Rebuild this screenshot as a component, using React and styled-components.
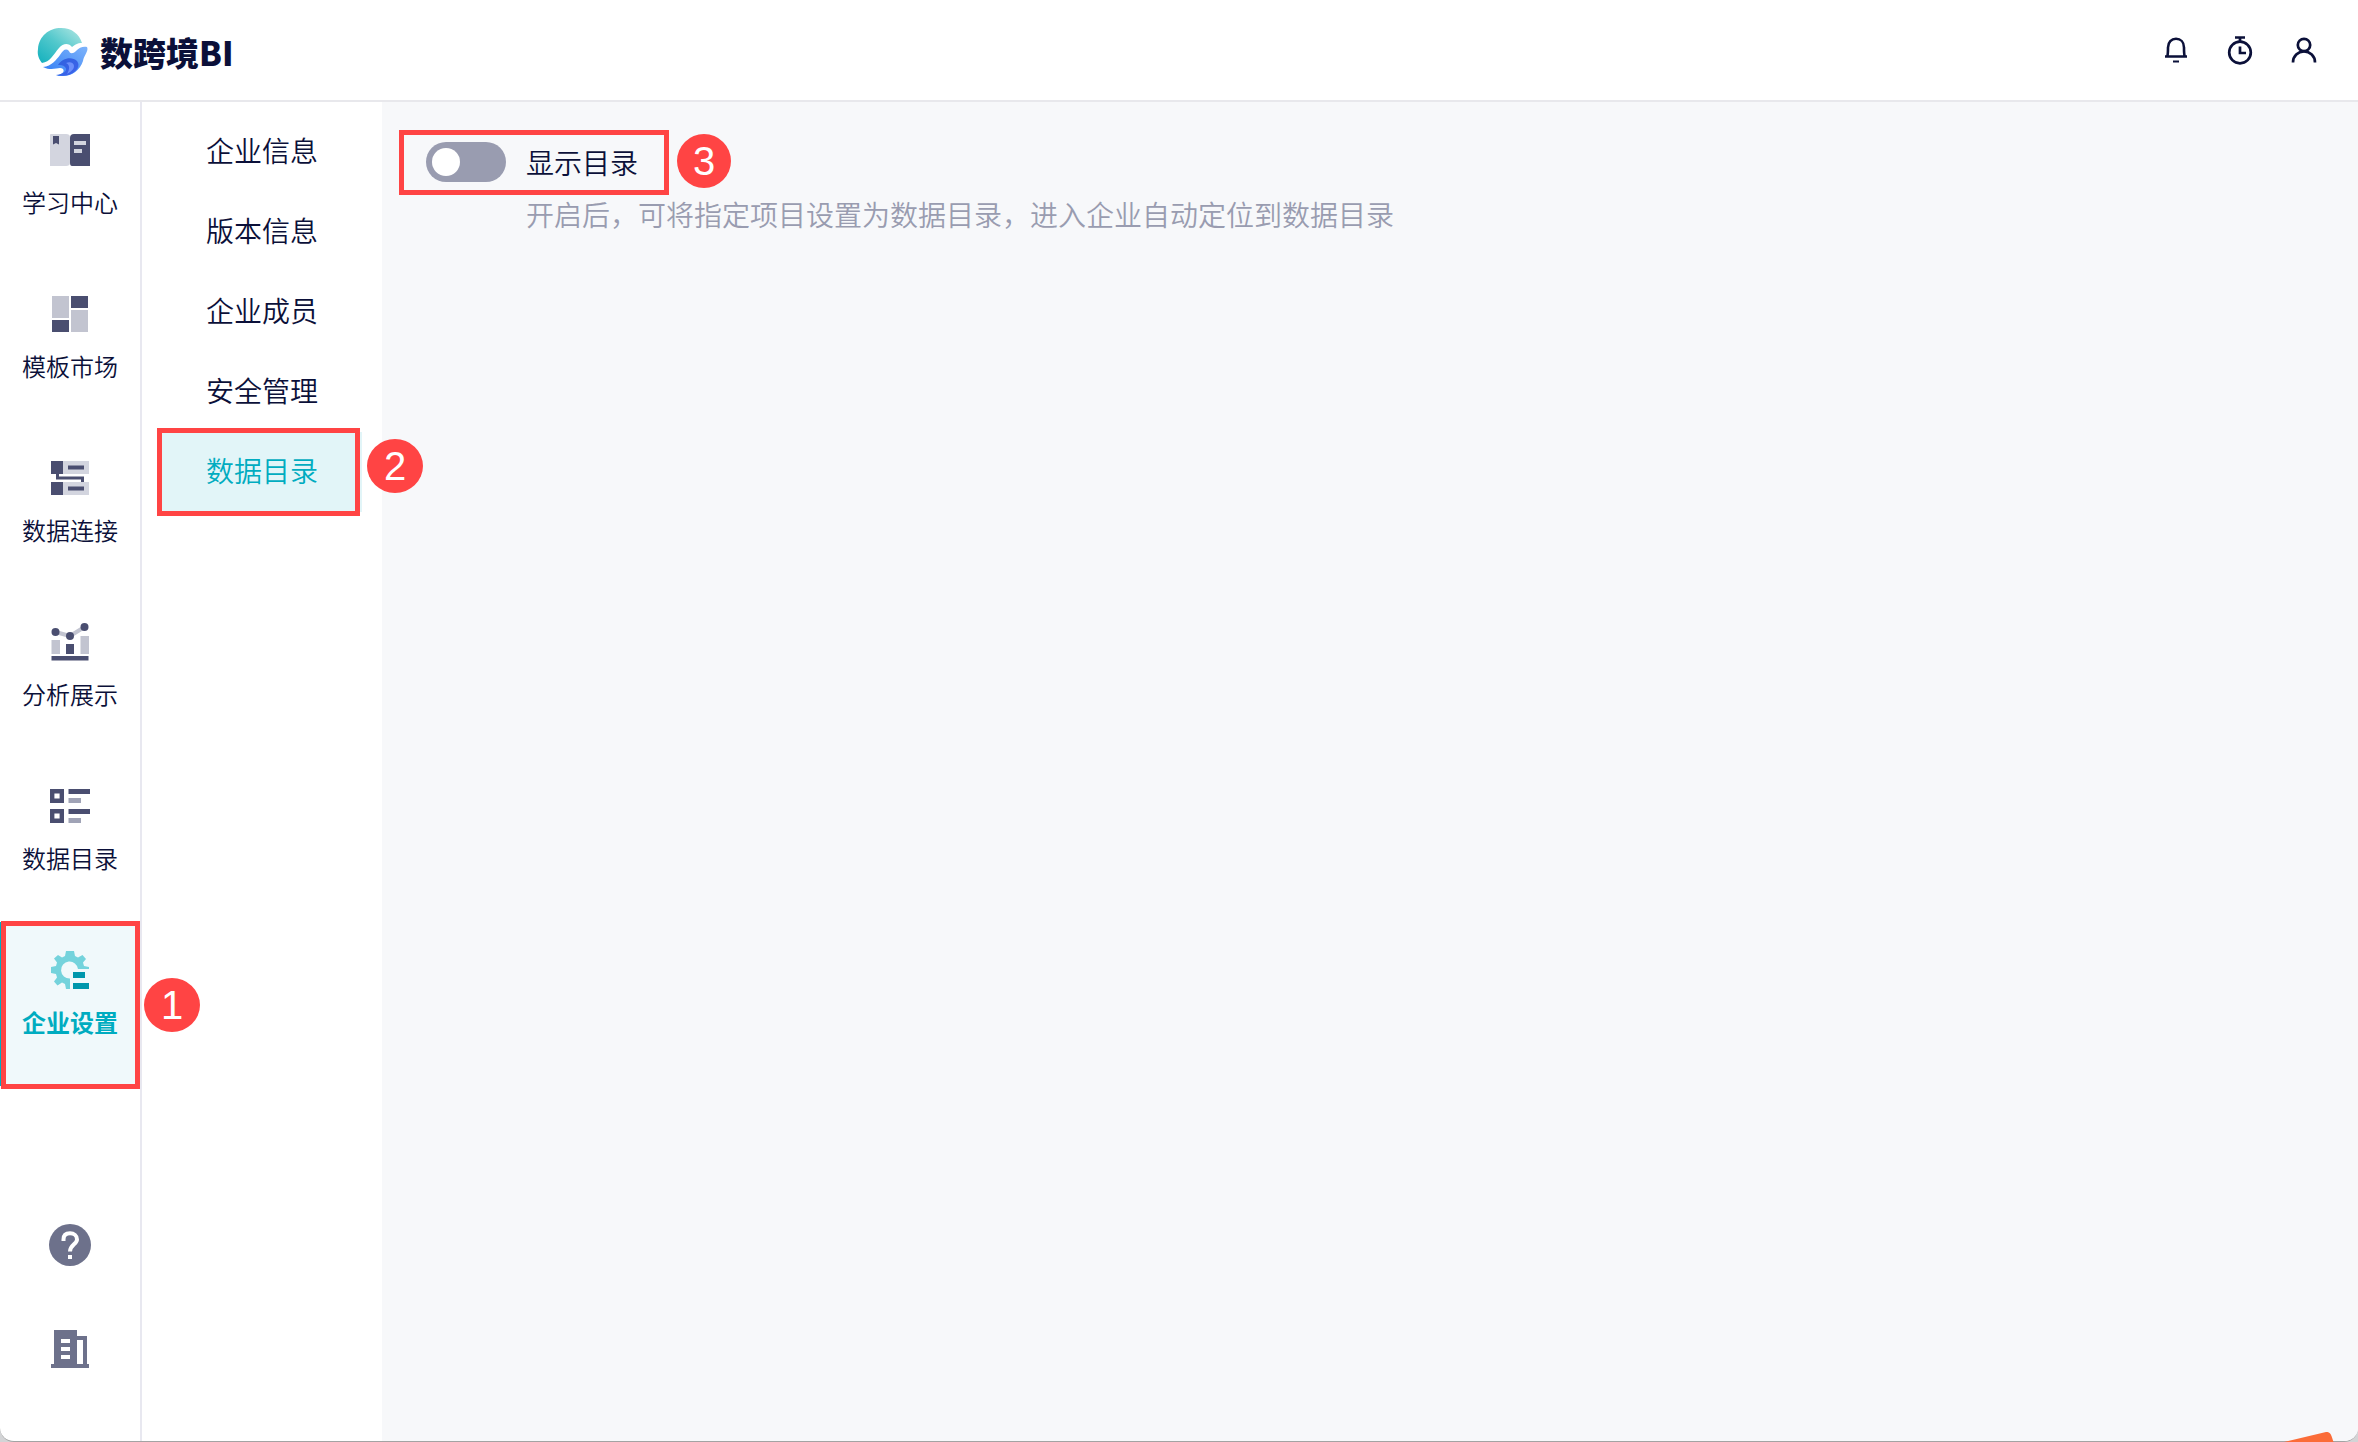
import React, { useState } from "react";
import styled, { createGlobalStyle, css } from "styled-components";

const GlobalStyle = createGlobalStyle`
  *, *::before, *::after { box-sizing: border-box; }
  body { margin: 0; background: #d3d4d6; }
  body, button, input { font-family: "Noto Sans CJK SC", "Noto Sans", sans-serif; }
  ul { list-style: none; margin: 0; padding: 0; }
  a { color: inherit; text-decoration: none; }
`;

const ink = "#0b1039";
const slate = "#4a4e70";
const pale = "#d3d5df";
const mist = "#c2c4d0";
const teal = "#00acc0";
const red = "#ff4444";

const Window = styled.div`
  display: flex;
  flex-direction: column;
  min-height: 100vh;
  overflow: hidden;
  background: #ffffff;
  border-bottom: 1px solid #a3a3a3;
  border-radius: 0 0 14px 14px;
  color: ${ink};
`;

const Header = styled.header`
  display: flex;
  align-items: center;
  justify-content: space-between;
  height: 102px;
  padding: 0 34px 0 36px;
  border-bottom: 2px solid #e8e8ec;
`;

const Brand = styled.a`
  display: flex;
  align-items: center;
  gap: 12px;
  padding-top: 4px;
  font-size: 33px;
  font-weight: 900;
  line-height: 48px;
`;

const Tools = styled.div`
  display: flex;
  gap: 24px;
`;

const ToolButton = styled.button`
  display: flex;
  align-items: center;
  justify-content: center;
  width: 40px;
  height: 40px;
  padding: 0;
  border: 0;
  background: none;
  color: ${ink};
`;

const Body = styled.div`
  display: flex;
  flex: 1;
`;

const Rail = styled.nav`
  display: flex;
  flex-direction: column;
  justify-content: space-between;
  flex: none;
  width: 142px;
  border-right: 2px solid #e8e8f0;
`;

const RailItem = styled.li`
  position: relative;
`;

const RailLink = styled.a`
  display: flex;
  flex-direction: column;
  align-items: center;
  gap: 16px;
  height: 164px;
  padding-top: 28px;
  font-size: 24px;
  font-weight: 350;
  line-height: 32px;
  ${(p) => p.$active && css`
    background: #f0f9fb;
    box-shadow: inset 4px 0 0 ${teal};
    color: ${teal};
    font-weight: 700;
  `}
`;

const RailFooter = styled.div`
  display: flex;
  flex-direction: column;
  align-items: center;
  padding-bottom: 40px;
`;

const FooterButton = styled.button`
  display: flex;
  align-items: center;
  justify-content: center;
  width: 100%;
  height: 104px;
  padding: 0;
  border: 0;
  background: none;
  color: #6d718b;
`;

const SubMenu = styled.nav`
  flex: none;
  width: 240px;
  padding: 10px 20px;
`;

const SubItem = styled.li`
  position: relative;
`;

const SubLink = styled.a`
  display: block;
  padding-bottom: 4px;
  font-size: 28px;
  font-weight: 350;
  line-height: 76px;
  text-align: center;
  ${(p) => p.$active && css`
    background: #e2f5f8;
    color: ${teal};
  `}
`;

const Main = styled.main`
  flex: 1;
  min-width: 0;
  padding: 40px 44px;
  background: #f7f8fa;
`;

const Setting = styled.div`
  display: grid;
  grid-template-columns: 80px 1fr;
  column-gap: 20px;
  row-gap: 12px;
  font-size: 28px;
  font-weight: 350;
  line-height: 40px;
`;

const SwitchRow = styled.div`
  position: relative;
  display: flex;
  grid-column: 1 / -1;
  gap: 20px;
  justify-self: start;
`;

const Switch = styled.input`
  appearance: none;
  display: flex;
  align-items: center;
  width: 80px;
  height: 40px;
  margin: 0;
  padding: 0 6px;
  border-radius: 20px;
  background: #999cb0;
  &::before {
    content: "";
    width: 28px;
    height: 28px;
    border-radius: 50%;
    background: #ffffff;
  }
  &:checked {
    justify-content: flex-end;
    background: ${teal};
  }
`;

const Hint = styled.p`
  grid-column: 2;
  margin: 0;
  color: #999cb0;
`;

const Frame = styled.span`
  position: absolute;
  z-index: 1;
  inset: ${(p) => p.$inset};
  border: 5px solid ${red};
  pointer-events: none;
`;

const Step = styled.span`
  position: absolute;
  z-index: 1;
  top: ${(p) => p.$top}px;
  left: ${(p) => p.$left}px;
  width: ${(p) => p.$width || 56}px;
  height: 54px;
  border-radius: 50%;
  background: ${red};
  color: #ffffff;
  font: 400 40px/54px "Liberation Sans", Arial, sans-serif;
  text-align: center;
`;

const Sticker = styled.svg`
  position: fixed;
  right: 24px;
  bottom: 0;
`;

const Logo = () => (
  <svg width="52" height="52" viewBox="0 0 52 52" aria-hidden="true">
    <defs>
      <linearGradient id="sky" x1="0" y1="1" x2="1" y2="0">
        <stop offset="0" stopColor="#12b0bd" />
        <stop offset="0.5" stopColor="#52c8cc" />
        <stop offset="1" stopColor="#b4e8e4" />
      </linearGradient>
      <linearGradient id="wave" x1="0" y1="1" x2="1" y2="0">
        <stop offset="0" stopColor="#2f7bf4" />
        <stop offset="1" stopColor="#7eb4fb" />
      </linearGradient>
      <linearGradient id="curl" x1="0" y1="0" x2="1" y2="1">
        <stop offset="0" stopColor="#2f62dc" />
        <stop offset="1" stopColor="#3f63ee" />
      </linearGradient>
    </defs>
    <path d="M6 37C3 33 1 29 2 23C3 10 13 2 25 2C36 2 43 8 46 17C41 17 39 19 36 21C33 17 27 17 23 22C17 29 14 36 6 37Z" fill="url(#sky)" />
    <path d="M7 41C16 40 20 34 24 29C27 24 30 22 33 25C34 28 37 28 40 25C43 21 48 20 51 21C53 25 48 29 47 35C44 44 36 50 27 50H20C26 48 29 46 27 43C23 40 17 46 7 41Z" fill="url(#wave)" />
    <path d="M22 39C26 32 36 30 41 35C45 40 40 46 35 48C31 50 26 50 20 49C29 48 32 44 29 41C27 39 24 39 22 39Z" fill="url(#curl)" />
    <path d="M30 37C34 35 38 37 38 40C38 44 34 46 31 48C34 43 34 39 30 37Z" fill="#6c8ffa" />
  </svg>
);

const BellIcon = () => (
  <svg width="24" height="28" viewBox="0 0 24 28" fill="none" stroke="currentColor" strokeWidth="2.6" aria-hidden="true">
    <path d="M1 20.500H23M3.300 20.500C4 18 4 15 4 11.500C4 6 7.500 2.800 12 2.800S20 6 20 11.500C20 15 20 18 20.700 20.500" />
    <path d="M9 25.500H15" strokeWidth="2" />
  </svg>
);

const TimerIcon = () => (
  <svg width="26" height="30" viewBox="0 0 26 30" fill="none" stroke="currentColor" strokeWidth="2.700" aria-hidden="true">
    <circle cx="13" cy="17.500" r="10.800" />
    <path d="M8 2.500H18M13 2V7M13 11.500V18H19" />
  </svg>
);

const UserIcon = () => (
  <svg width="26" height="28" viewBox="0 0 26 28" fill="none" stroke="currentColor" strokeWidth="2.700" aria-hidden="true">
    <circle cx="13" cy="9" r="6.200" />
    <path d="M2 26.500C2 20 7 15.500 13 15.500S24 20 24 26.500" />
  </svg>
);

const RailSvg = ({ children }) => (
  <svg width="40" height="40" viewBox="0 0 40 40" aria-hidden="true">{children}</svg>
);

const BookIcon = () => (
  <RailSvg>
    <path d="M0 5Q0 4 1 4H16Q20 4 20 7V33Q20 36 16 36H0Z" fill={pale} />
    <path d="M20 8Q20 4 24 4H40V36H22Q20 36 20 33Z" fill={slate} />
    <path d="M3 6H9V14.500L6 13L3 14.500Z" fill={slate} />
    <path d="M24 11H36V15H24ZM24 19H32V23H24Z" fill={pale} />
  </RailSvg>
);

const TemplateIcon = () => (
  <RailSvg>
    <path d="M2 2H19V24H2ZM21 16H38V38H21Z" fill={mist} />
    <path d="M21 2H38V14H21ZM2 26H19V38H2Z" fill={slate} />
  </RailSvg>
);

const ConnectIcon = () => (
  <RailSvg>
    <path d="M13 3H39V16H13ZM13 24H39V37H13Z" fill={pale} />
    <path d="M1 3H13V16H1ZM1 24H13V37H1Z" fill={slate} />
    <path d="M18 9.500H34M18 30.500H34" stroke={slate} strokeWidth="4" />
    <path d="M7.500 16V20H32.500V24" fill="none" stroke={slate} strokeWidth="3" />
  </RailSvg>
);

const ChartIcon = () => (
  <RailSvg>
    <path d="M1.500 18H10V32H1.500ZM30.500 14H39V32H30.500Z" fill={mist} />
    <path d="M5.500 10L20 14L34.500 5" fill="none" stroke={mist} strokeWidth="4" />
    <path d="M16 22H24V32H16ZM1.500 34H38.500V38.500H1.500Z" fill={slate} />
    <circle cx="5.500" cy="10" r="4" fill={slate} />
    <circle cx="20" cy="14" r="4" fill={slate} />
    <circle cx="34.500" cy="5" r="4" fill={slate} />
  </RailSvg>
);

const CatalogIcon = () => (
  <RailSvg>
    <path d="M2.200 5.200H11.800V14.800H2.200ZM2.200 25.200H11.800V34.800H2.200Z" fill="none" stroke={slate} strokeWidth="4.400" />
    <path d="M18.500 5.500H40M18.500 25.500H40" stroke={slate} strokeWidth="5" />
    <path d="M18.500 14.500H31M18.500 34.500H31" stroke="#a0a3b6" strokeWidth="5" />
  </RailSvg>
);

const GearIcon = () => (
  <RailSvg>
    <path
      d="M16 1H24L25 6L28 7.500L32.500 5L36 9L33 12.500L34 16L39 17V19H28A8.500 8.500 0 1 0 20 28.500V39H16L15 34L12 32.500L7.500 35.500L4 31.500L7 27.500L6 24L1 23V17L6 16L7 12.500L4 8.500L8 5L12 7.500L15 6Z"
      fill="#74d3dc"
    />
    <path d="M23 22H35V28H23ZM23 33H39V39H23Z" fill="#0097ac" />
  </RailSvg>
);

const HelpIcon = () => (
  <svg width="42" height="42" viewBox="0 0 42 42" aria-hidden="true">
    <circle cx="21" cy="21" r="21" fill="currentColor" />
    <path d="M14.500 17V15.500C14.500 11.500 17 9.300 21 9.300S28 11.700 28 15.500C28 20 21 21 21 27.500" fill="none" stroke="#fff" strokeWidth="4" />
    <path d="M19 31H23V35H19Z" fill="#fff" />
  </svg>
);

const BuildingIcon = () => (
  <svg width="38" height="38" viewBox="0 0 38 38" aria-hidden="true">
    <path
      d="M3 0H26V6H36V34H38V38H0V34H3ZM10 9V13H19V9ZM10 17V21H19V17ZM10 25V29H19V25ZM26 10V34H32V10Z"
      fill="currentColor"
      fillRule="evenodd"
    />
  </svg>
);

const tools = [
  { label: "通知", Icon: BellIcon },
  { label: "计时", Icon: TimerIcon },
  { label: "用户", Icon: UserIcon },
];

const railItems = [
  { label: "学习中心", Icon: BookIcon },
  { label: "模板市场", Icon: TemplateIcon },
  { label: "数据连接", Icon: ConnectIcon },
  { label: "分析展示", Icon: ChartIcon },
  { label: "数据目录", Icon: CatalogIcon },
  { label: "企业设置", Icon: GearIcon, active: true },
];

const subItems = [
  { label: "企业信息" },
  { label: "版本信息" },
  { label: "企业成员" },
  { label: "安全管理" },
  { label: "数据目录", active: true },
];

export default function App() {
  const [shown, setShown] = useState(false);

  return (
    <>
      <GlobalStyle />
      <Window>
        <Header>
          <Brand href="#home"><Logo />数跨境BI</Brand>
          <Tools>
            {tools.map(({ label, Icon }) => (
              <ToolButton key={label} type="button" aria-label={label}><Icon /></ToolButton>
            ))}
          </Tools>
        </Header>
        <Body>
          <Rail>
            <ul>
              {railItems.map(({ label, Icon, active }) => (
                <RailItem key={label}>
                  <RailLink href={`#${label}`} $active={active}><Icon />{label}</RailLink>
                  {active && (
                    <>
                      <Frame $inset="-1px 0 -3px 1px" />
                      <Step $top={56} $left={144}>1</Step>
                    </>
                  )}
                </RailItem>
              ))}
            </ul>
            <RailFooter>
              <FooterButton type="button" aria-label="帮助"><HelpIcon /></FooterButton>
              <FooterButton type="button" aria-label="企业"><BuildingIcon /></FooterButton>
            </RailFooter>
          </Rail>
          <SubMenu>
            <ul>
              {subItems.map(({ label, active }) => (
                <SubItem key={label}>
                  <SubLink href={`#sub-${label}`} $active={active}>{label}</SubLink>
                  {active && (
                    <>
                      <Frame $inset="-4px 2px -4px -5px" />
                      <Step $top={7} $left={205}>2</Step>
                    </>
                  )}
                </SubItem>
              ))}
            </ul>
          </SubMenu>
          <Main>
            <Setting>
              <SwitchRow>
                <Switch
                  id="show-catalog"
                  type="checkbox"
                  role="switch"
                  checked={shown}
                  onChange={(e) => setShown(e.target.checked)}
                />
                <label htmlFor="show-catalog">显示目录</label>
                <Frame $inset="-12px -31px -13px -27px" />
                <Step $top={-8} $left={251} $width={54}>3</Step>
              </SwitchRow>
              <Hint>开启后，可将指定项目设置为数据目录，进入企业自动定位到数据目录</Hint>
            </Setting>
          </Main>
        </Body>
      </Window>
      <Sticker width="50" height="10" viewBox="0 0 50 10" aria-hidden="true">
        <path d="M0 10L42 0Q46 -0.500 47.500 4L49.500 10Z" fill="#fb6c38" />
      </Sticker>
    </>
  );
}
